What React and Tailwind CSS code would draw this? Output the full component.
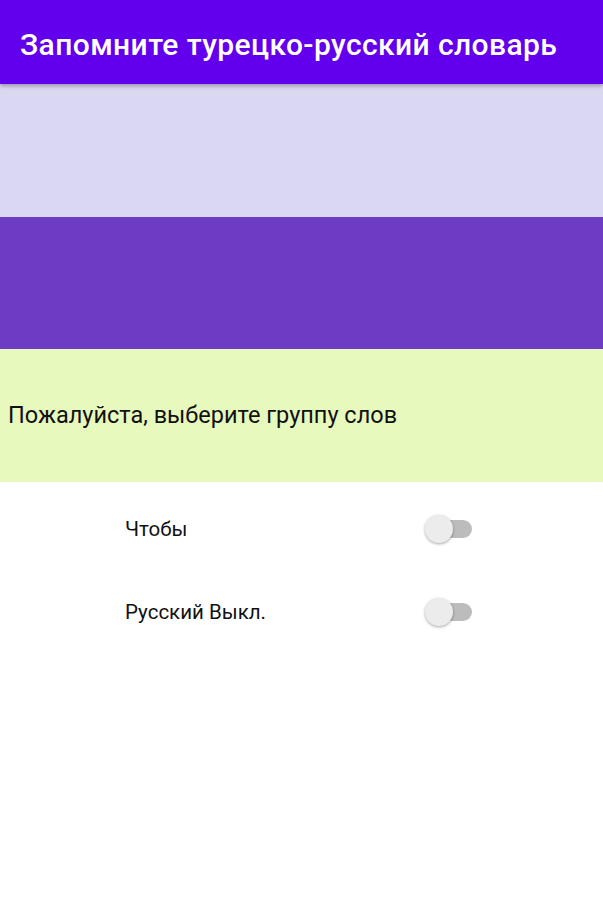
import React from "react";

function Toggle() {
  return (
    <div className="relative w-[48px] h-[30px] flex items-center">
      <div className="absolute left-[14px] w-[33px] h-[18px] rounded-full bg-[#bcbcbc]" />
      <div className="absolute left-0 w-[28px] h-[28px] rounded-full bg-[#ececec] shadow-[0_1px_3px_rgba(0,0,0,0.35)]" />
    </div>
  );
}

export default function App() {
  return (
    <div className="w-[603px] h-[900px] bg-white flex flex-col" style={{ fontFamily: "Roboto, 'Noto Sans', sans-serif" }}>
      <div className="h-[84px] bg-[#6200ee] flex items-center pl-[20px] shadow-[0_2px_4px_rgba(0,0,0,0.3)] relative z-10">
        <span className="text-white text-[30px] leading-none font-medium tracking-[0.4px] mt-[6px]">Запомните турецко-русский словарь</span>
      </div>
      <div className="h-[133px] bg-[#dad7f2]" />
      <div className="h-[132px] bg-[#6d3cc4]" />
      <div className="h-[133px] bg-[#e8f9bd] flex items-center pl-[8px]">
        <span className="text-[23.5px] text-[#111]">Пожалуйста, выберите группу слов</span>
      </div>
      <div className="flex flex-col pt-[32px] gap-[53px]">
        <div className="flex items-center h-[30px]">
          <span className="w-[300px] pl-[125px] text-[20.5px] text-[#111]">Чтобы</span>
          <div className="ml-[125px]"><Toggle /></div>
        </div>
        <div className="flex items-center h-[30px]">
          <span className="w-[300px] pl-[125px] text-[20.5px] text-[#111]">Русский Выкл.</span>
          <div className="ml-[125px]"><Toggle /></div>
        </div>
      </div>
    </div>
  );
}
